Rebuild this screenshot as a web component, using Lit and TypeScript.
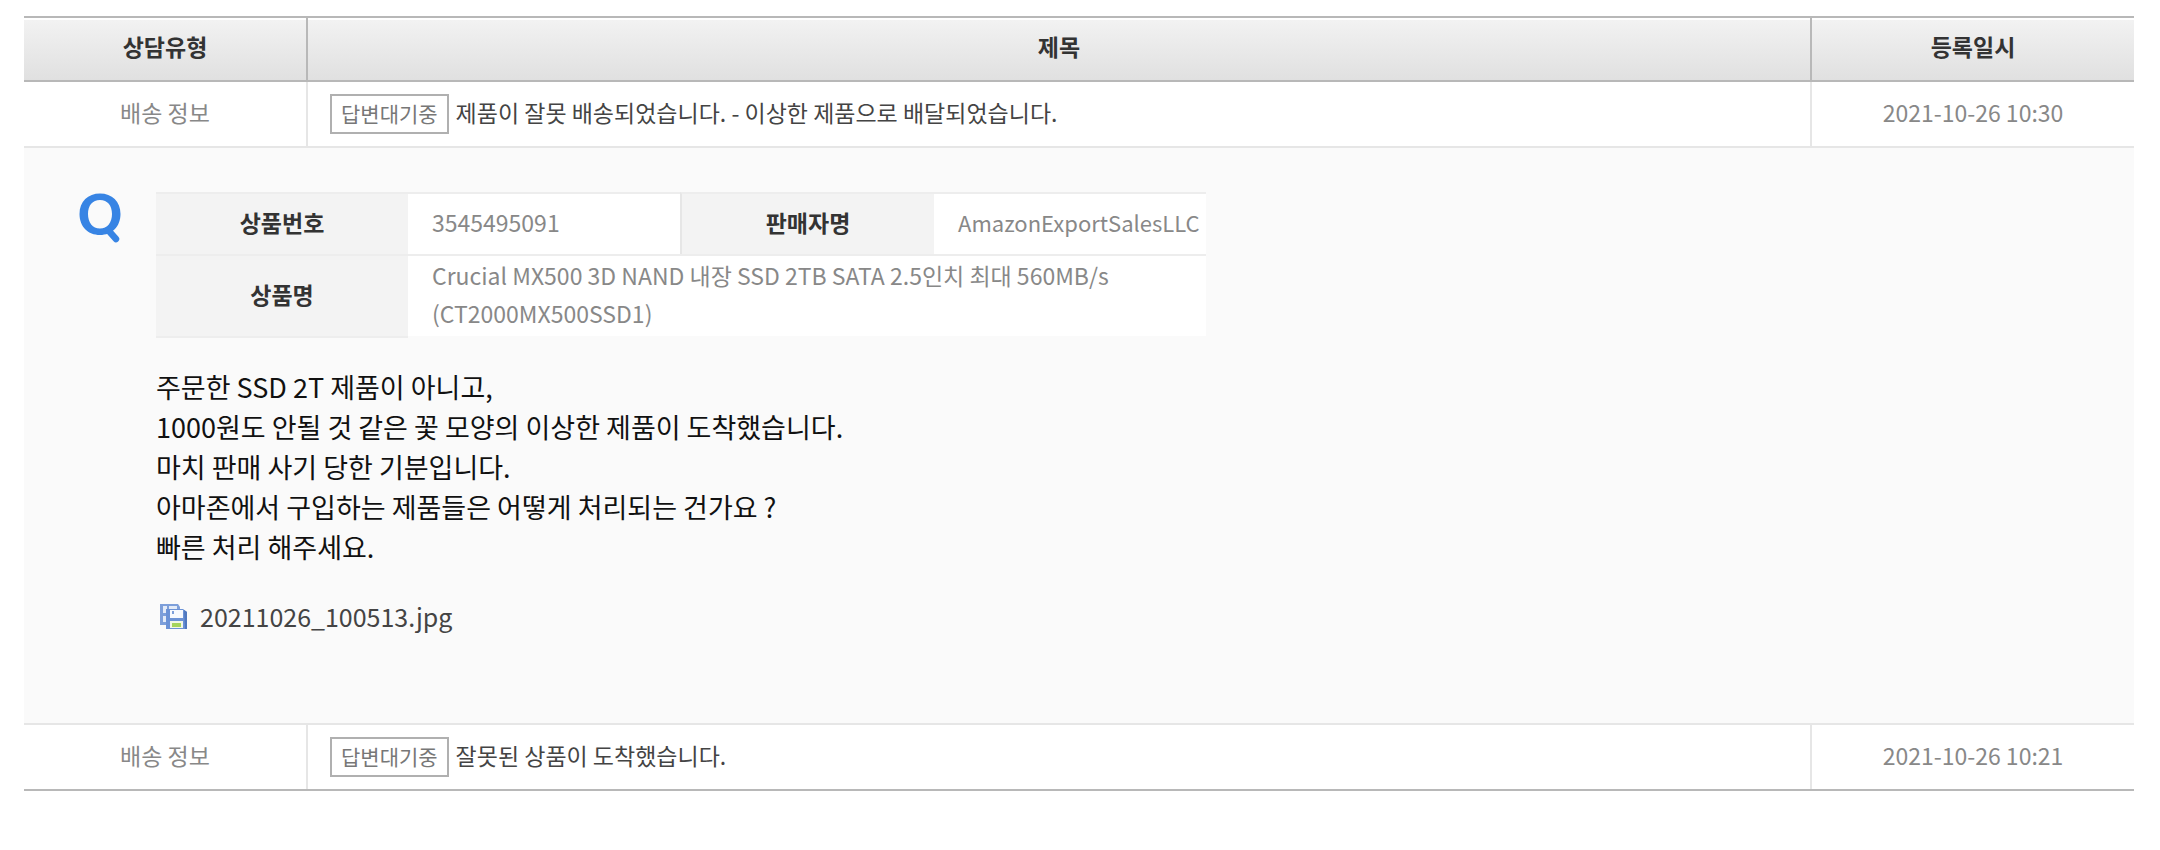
import { LitElement, html, css, svg } from "lit";
import { customElement, property } from "lit/decorators.js";

interface Inquiry {
  type: string;
  status: string;
  title: string;
  date: string;
  open: boolean;
}

const inquiries: Inquiry[] = [
  {
    type: "배송 정보",
    status: "답변대기중",
    title: "제품이 잘못 배송되었습니다. - 이상한 제품으로 배달되었습니다.",
    date: "2021-10-26 10:30",
    open: true,
  },
  {
    type: "배송 정보",
    status: "답변대기중",
    title: "잘못된 상품이 도착했습니다.",
    date: "2021-10-26 10:21",
    open: false,
  },
];

const message = [
  "주문한 SSD 2T 제품이 아니고,",
  "1000원도 안될 것 같은 꽃 모양의 이상한 제품이 도착했습니다.",
  "마치 판매 사기 당한 기분입니다.",
  "아마존에서 구입하는 제품들은 어떻게 처리되는 건가요 ?",
  "빠른 처리 해주세요.",
];

const questionMark = svg`
  <path fill="#3784e4" fill-rule="evenodd" d="M20 1.500C32 1.500 40.500 9.500 40.500 22S32 43 20 43S-.5 34.500 -.5 22S8 1.500 20 1.500ZM20 8C12.500 8 8 13.500 8 22S12.500 36.500 20 36.500S32 30.500 32 22S27.500 8 20 8Z"/>
  <path d="M28 38 L36 47" fill="none" stroke="#3784e4" stroke-width="6.5" stroke-linecap="round"/>`;

const disks = svg`
  <path d="M1 1H19L21 4V22H1Z" fill="#7d9fda"/>
  <path d="M4 3H8V10H4ZM10 3H18V8H10ZM4 13H8V19H4Z" fill="#e3ebf8"/>
  <path d="M8 6H24L28 9V26H7V6Z" fill="#6b92d6"/>
  <path d="M25 7L28 9V26H26Z" fill="#4f78bf"/>
  <path d="M11 7H24V15H11Z" fill="#f6f9fe"/>
  <path d="M13 8H15V11H13Z" fill="#7d9fda"/>
  <path d="M11 18H24V25H11Z" fill="#f2f6e6"/>
  <path d="M13 20H22V24H13Z" fill="#a5d45c"/>`;

@customElement("inquiry-detail")
export class InquiryDetail extends LitElement {
  static styles = css`
    :host {
      display: flex;
      gap: 32px;
      padding: 44px 40px 84px 52px;
      font-size: 27px;
      line-height: 40px;
    }
    .mark {
      flex: none;
      width: 48px;
      height: 52px;
    }
    .content {
      min-width: 0;
    }
    .product {
      width: 1050px;
      max-width: 100%;
      table-layout: fixed;
      border-spacing: 0;
      margin-bottom: 29px;
      font-size: 23px;
      line-height: 38px;
    }
    .product th,
    .product td {
      box-sizing: border-box;
      border-top: 2px solid #ededed;
    }
    .product th {
      padding: 0 0 4px;
      width: 24%;
      background: #f3f3f3;
      color: #333;
    }
    .product td {
      height: 62px;
      padding: 0 0 4px 24px;
      background: #fff;
      color: #888;
    }
    .product .seller {
      width: 254px;
      border-left: 2px solid #e6e6e6;
    }
    .product .company {
      font-size: 22px;
    }
    .product .name {
      border-bottom: 2px solid #ededed;
    }
    .product .wide {
      border-bottom: 2px solid #fafafa;
    }
    .message {
      margin: 0;
      color: #111;
    }
    .file {
      display: inline-flex;
      align-items: center;
      gap: 12px;
      margin: 29px 0 0 3px;
      color: #444;
      font-size: 25px;
      text-decoration: none;
    }
    .disks {
      width: 29px;
      height: 27px;
    }
  `;

  render() {
    return html`
      <svg class="mark" viewBox="-4 0 48 52" role="img" aria-label="질문">${questionMark}</svg>
      <div class="content">
        <table class="product">
          <tr>
            <th scope="row">상품번호</th>
            <td>3545495091</td>
            <th scope="row" class="seller">판매자명</th>
            <td class="company">AmazonExportSalesLLC</td>
          </tr>
          <tr>
            <th scope="row" class="name">상품명</th>
            <td class="wide" colspan="3">
              Crucial MX500 3D NAND 내장 SSD 2TB SATA 2.5인치 최대 560MB/s (CT2000MX500SSD1)
            </td>
          </tr>
        </table>
        <p class="message">${message.map((line) => html`${line}<br />`)}</p>
        <a class="file" href="#"
          ><svg class="disks" viewBox="0 0 29 27" aria-hidden="true">${disks}</svg>20211026_100513.jpg</a
        >
      </div>
    `;
  }
}

@customElement("app-root")
export class AppRoot extends LitElement {
  @property({ attribute: false }) items = inquiries;

  static styles = css`
    :host {
      display: block;
      padding: 16px 26px 60px 24px;
      background: #fff;
      font-family: "Noto Sans CJK KR", sans-serif;
      font-size: 23px;
      line-height: 40px;
    }
    .list {
      width: 100%;
      table-layout: fixed;
      border-spacing: 0;
      border-bottom: 2px solid #b8b8b8;
    }
    .type {
      width: 282px;
    }
    .date {
      width: 324px;
    }
    .list th {
      box-sizing: border-box;
      height: 66px;
      padding: 0 0 6px;
      border-top: 2px solid #b8b8b8;
      border-bottom: 2px solid #b8b8b8;
      background: linear-gradient(#fff 2px, #f2f2f2 2px, #e0e0e0);
      color: #333;
    }
    .list th + th {
      border-left: 2px solid #b8b8b8;
    }
    .cell {
      box-sizing: border-box;
      height: 64px;
      padding: 0 0 4px;
      color: #888;
      text-align: center;
    }
    .cell + .cell {
      border-left: 2px solid #e6e6e6;
    }
    .cell.topic {
      padding: 0 0 0 22px;
    }
    .subject {
      display: flex;
      align-items: center;
      gap: 7px;
    }
    .status {
      box-sizing: border-box;
      height: 40px;
      padding: 0 9px;
      border: 2px solid #b0b0b0;
      color: #777;
      font-size: 21px;
      line-height: 34px;
    }
    .title {
      padding-bottom: 4px;
      color: #444;
      text-decoration: none;
    }
    .detail {
      padding: 0;
      border-top: 2px solid #e6e6e6;
      border-bottom: 2px solid #e6e6e6;
      background: #fafafa;
    }
  `;

  private row(item: Inquiry) {
    return html`
      <tr>
        <td class="cell">${item.type}</td>
        <td class="cell topic">
          <div class="subject">
            <span class="status">${item.status}</span>
            <a class="title" href="#">${item.title}</a>
          </div>
        </td>
        <td class="cell">${item.date}</td>
      </tr>
      ${item.open
        ? html`<tr>
            <td class="detail" colspan="3"><inquiry-detail></inquiry-detail></td>
          </tr>`
        : ""}
    `;
  }

  render() {
    return html`
      <table class="list">
        <thead>
          <tr>
            <th scope="col" class="type">상담유형</th>
            <th scope="col">제목</th>
            <th scope="col" class="date">등록일시</th>
          </tr>
        </thead>
        <tbody>
          ${this.items.map((item) => this.row(item))}
        </tbody>
      </table>
    `;
  }
}
